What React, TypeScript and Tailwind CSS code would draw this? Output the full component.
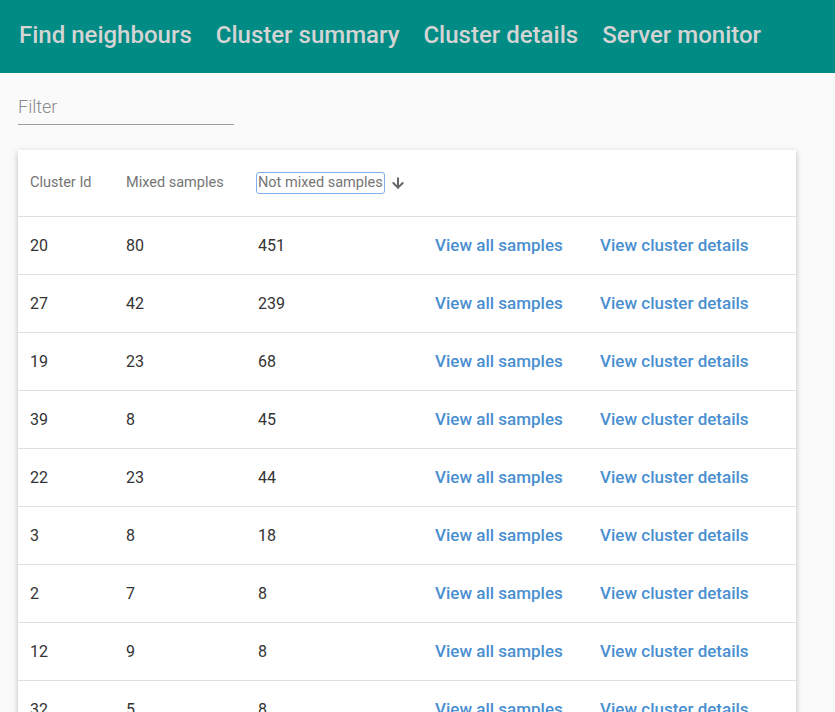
import { ArrowDown } from "lucide-react";

const navItems = ["Find neighbours", "Cluster summary", "Cluster details", "Server monitor"];

const rows = [
  { id: 20, mixed: 80, notMixed: 451 },
  { id: 27, mixed: 42, notMixed: 239 },
  { id: 19, mixed: 23, notMixed: 68 },
  { id: 39, mixed: 8, notMixed: 45 },
  { id: 22, mixed: 23, notMixed: 44 },
  { id: 3, mixed: 8, notMixed: 18 },
  { id: 2, mixed: 7, notMixed: 8 },
  { id: 12, mixed: 9, notMixed: 8 },
  { id: 32, mixed: 5, notMixed: 8 },
];

export default function App() {
  return (
    <div className="min-h-screen bg-[#fafafa] font-['Roboto',sans-serif] overflow-hidden h-[712px]">
      <header className="h-[73px] bg-[#008b85] flex items-center gap-[24px] px-[19px]">
        {navItems.map((item) => (
          <a key={item} href="#" className="text-[24px] font-medium text-[#d4d4d4] leading-none pb-[4px]">
            {item}
          </a>
        ))}
      </header>

      <div className="px-[18px]">
        <div className="w-[216px] pt-[20px] border-b border-[#9e9e9e]">
          <input
            placeholder="Filter"
            className="w-full bg-transparent outline-none text-[18px] text-[#333] placeholder:text-[#8a8a8a] pb-[4px] font-light"
          />
        </div>

        <div className="mt-[25px] w-[778px] bg-white shadow-[0_2px_6px_rgba(0,0,0,0.25)]">
          <div className="h-[67px] flex items-center text-[14.5px] text-[#757575] border-b border-[#e0e0e0]">
            <div className="w-[108px] pl-[12px]">Cluster Id</div>
            <div className="w-[132px]">Mixed samples</div>
            <div className="w-[177px] flex items-center">
              <span className="outline outline-[#7fb0ec] outline-[1.5px] rounded-[2px] leading-[20px] -ml-px pl-px pr-px">Not mixed samples</span>
              <ArrowDown size={16} strokeWidth={3} className="ml-[6px] text-[#666]" />
            </div>
          </div>
          {rows.map((r) => (
            <div key={r.id} className="h-[58px] flex items-center text-[16px] text-[#333] border-b border-[#e0e0e0]">
              <div className="w-[108px] pl-[12px]">{r.id}</div>
              <div className="w-[132px]">{r.mixed}</div>
              <div className="w-[177px]">{r.notMixed}</div>
              <a href="#" className="w-[165px] text-[17px] font-medium text-[#4a8fd0]">View all samples</a>
              <a href="#" className="text-[17px] font-medium text-[#4a8fd0]">View cluster details</a>
            </div>
          ))}
        </div>
      </div>
    </div>
  );
}
